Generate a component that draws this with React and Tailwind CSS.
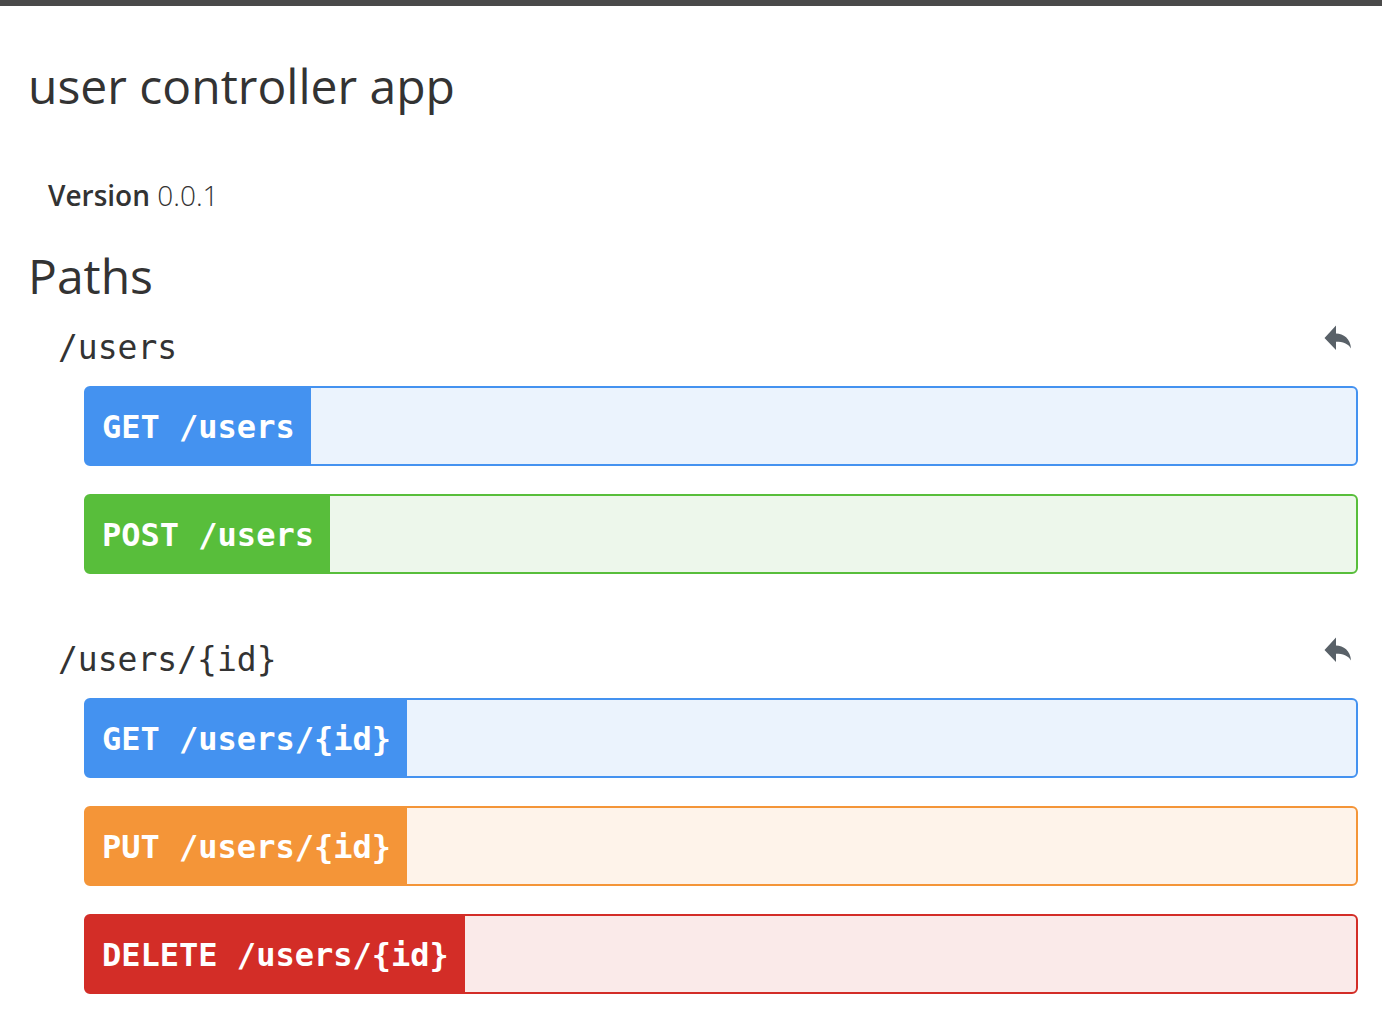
const styles = {
  GET: { panel: "border-[#4492f0] bg-[#ebf3fd]", label: "bg-[#4492f0]" },
  POST: { panel: "border-[#58be3b] bg-[#edf7eb]", label: "bg-[#58be3b]" },
  PUT: { panel: "border-[#f49538] bg-[#fef3ea]", label: "bg-[#f49538]" },
  DELETE: { panel: "border-[#d32d27] bg-[#faeae9]", label: "bg-[#d32d27]" },
};

const paths = [
  { path: "/users", methods: ["GET", "POST"] },
  { path: "/users/{id}", methods: ["GET", "PUT", "DELETE"] },
];

function BackIcon() {
  return (
    <svg viewBox="0 0 28 28" className="size-7 fill-[#596168]" aria-hidden="true">
      <path d="M0.5 14 12 1.500v8c7.500 .3 14.500 5 15 15C24 19.500 19 17.800 12 17.800V26z" />
    </svg>
  );
}

function Operation({ method, path }) {
  return (
    <article className={`flex rounded-md border-2 ${styles[method].panel}`}>
      <h4
        className={`px-4 pt-[17px] pb-[15px] font-['DejaVu_Sans_Mono',monospace] text-[32px] leading-[44px] font-bold whitespace-nowrap text-white ${styles[method].label}`}
      >
        {method} {path}
      </h4>
    </article>
  );
}

function PathSection({ path, methods }) {
  return (
    <section id={path} className="pr-6 pl-[58px]">
      <div className="flex items-start justify-between pr-[6px]">
        <h3 className="pt-0.5 font-['DejaVu_Sans_Mono',monospace] text-[33px] leading-[44px] text-[#333333]">{path}</h3>
        <a href="#top" aria-label="Back to top" className="block">
          <BackIcon />
        </a>
      </div>
      <div className="mt-4 flex flex-col gap-7 pl-[26px]">
        {methods.map((m) => (
          <Operation key={m} method={m} path={path} />
        ))}
      </div>
    </section>
  );
}

export default function App() {
  return (
    <div id="top" className="border-t-[6px] border-[#4a4a4a] bg-white pb-7 font-['Open_Sans',sans-serif] text-[#333333]">
      <h1 className="mt-[46px] pl-7 text-[48px] leading-[68px]">user controller app</h1>
      <p className="mt-[55px] pl-12 text-[28px] leading-10 font-light">
        <b className="font-semibold">Version</b> 0.0.1
      </p>
      <h2 className="mt-[27px] pl-7 text-[48px] leading-[68px]">Paths</h2>
      <div className="mt-[14px] flex flex-col gap-[62px]">
        {paths.map((p) => (
          <PathSection key={p.path} {...p} />
        ))}
      </div>
    </div>
  );
}
